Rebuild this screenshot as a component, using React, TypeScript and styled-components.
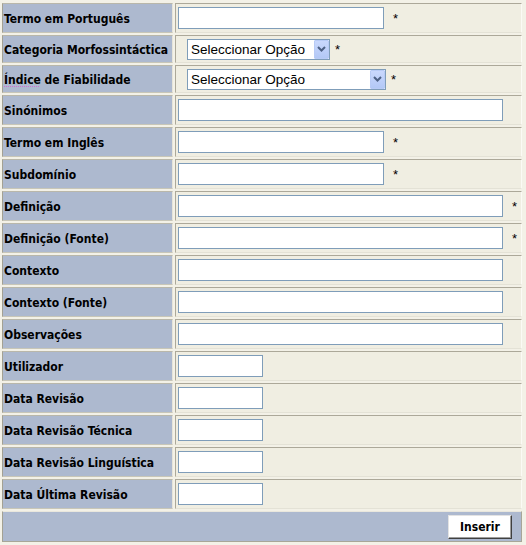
import React from 'react';
import styled, { createGlobalStyle } from 'styled-components';

const GlobalStyle = createGlobalStyle`
    body {
        margin: 0;
        background: #f3f1e7;
        font-family: "DejaVu Sans Condensed", "Liberation Sans", sans-serif;
        color: #000;
    }
`

const Form = styled.form`
    display: flex;
    flex-direction: column;
    gap: 2px;
    padding: 3px 0 0 2px;
    width: 520px;
`

const Row = styled.div<{ $h: number }>`
    display: grid;
    grid-template-columns: 171px 347px;
    column-gap: 2px;
    height: ${(p) => p.$h}px;
`

const Label = styled.div`
    background: #adb9cf;
    border: 1px solid;
    border-color: #b9b7aa #e6e4da #c8c6b8 #a3a193;
    display: flex;
    align-items: center;
    padding: 2px 0 0 1px;
    font-size: 12px;
    font-weight: bold;
    white-space: nowrap;
    overflow: hidden;
`

const Squiggle = styled.span`
    text-decoration: underline dotted #d070d0;
    text-underline-offset: 2px;
`

const Value = styled.div`
    background: #f0eee2;
    border: 1px solid;
    border-color: #aca899 #fbfaf5 #e4e2d6 #aca899;
    display: flex;
    align-items: center;
    padding-left: 2px;
`

const TextInput = styled.input<{ $w: number }>`
    width: ${(p) => p.$w}px;
    height: 22px;
    box-sizing: border-box;
    border: 1px solid #7f9db9;
    background: #fff;
    margin: 0;
    padding: 0 3px;
    font: 13px "Liberation Sans", sans-serif;
    outline: none;
`

const Required = styled.span<{ $gap: number }>`
    font: 13px "Liberation Sans", sans-serif;
    margin-left: ${(p) => p.$gap}px;
`

const SelectWrap = styled.div<{ $w: number }>`
    position: relative;
    width: ${(p) => p.$w}px;
    height: 21px;
    margin-left: 9px;
`

const Select = styled.select`
    appearance: none;
    width: 100%;
    height: 100%;
    box-sizing: border-box;
    border: 1px solid #7f9db9;
    border-radius: 0;
    background: #fff;
    margin: 0;
    padding: 0 0 0 3px;
    font: 13.5px "Liberation Sans", sans-serif;
    color: #000;
    outline: none;
`

const Arrow = styled.span`
    position: absolute;
    top: 1px;
    right: 1px;
    width: 15px;
    height: 19px;
    box-sizing: border-box;
    border: 1px solid #b8cbf6;
    border-radius: 1px;
    background: linear-gradient(#c9d8fd, #b3c8f6);
    display: flex;
    align-items: center;
    justify-content: center;
    pointer-events: none;
`

const Footer = styled.div`
    height: 31px;
    width: 520px;
    box-sizing: border-box;
    background: #adb9cf;
    border: 1px solid;
    border-color: #e9e7dd #a8a698 #a8a698 #a3a193;
    display: flex;
    align-items: center;
    justify-content: flex-end;
    padding-right: 9px;
`

const Button = styled.button`
    width: 64px;
    height: 24px;
    box-sizing: border-box;
    background: #fff;
    border: 1px solid;
    border-color: #e3e3e3 #404040 #404040 #e3e3e3;
    box-shadow: inset -1px -1px #9d9d9d;
    font: bold 12px "DejaVu Sans Condensed", "Liberation Sans", sans-serif;
    color: #000;
    padding: 0;
`

type Field = {
    label: React.ReactNode;
    kind: 'input' | 'select';
    w: number;
    req?: boolean;
};

const MD = 206;
const LG = 325;
const SM = 85;

const fields: Field[] = [
    { label: 'Termo em Português', kind: 'input', w: MD, req: true },
    { label: 'Categoria Morfossintáctica', kind: 'select', w: 143, req: true },
    { label: <span><Squiggle>Índice</Squiggle> de Fiabilidade</span>, kind: 'select', w: 199, req: true },
    { label: 'Sinónimos', kind: 'input', w: LG },
    { label: 'Termo em Inglês', kind: 'input', w: MD, req: true },
    { label: 'Subdomínio', kind: 'input', w: MD, req: true },
    { label: 'Definição', kind: 'input', w: LG, req: true },
    { label: 'Definição (Fonte)', kind: 'input', w: LG, req: true },
    { label: 'Contexto', kind: 'input', w: LG },
    { label: 'Contexto (Fonte)', kind: 'input', w: LG },
    { label: 'Observações', kind: 'input', w: LG },
    { label: 'Utilizador', kind: 'input', w: SM },
    { label: 'Data Revisão', kind: 'input', w: SM },
    { label: 'Data Revisão Técnica', kind: 'input', w: SM },
    { label: 'Data Revisão Linguística', kind: 'input', w: SM },
    { label: 'Data Última Revisão', kind: 'input', w: SM },
];

function App() {
    return (
        <>
            <GlobalStyle />
            <Form onSubmit={(e) => e.preventDefault()}>
                {fields.map((f, i) => (
                    <Row key={i} $h={f.kind === 'select' ? 28 : 30}>
                        <Label>{f.label}</Label>
                        <Value>
                            {f.kind === 'input' ? (
                                <TextInput type="text" $w={f.w} />
                            ) : (
                                <SelectWrap $w={f.w}>
                                    <Select defaultValue="">
                                        <option value="">Seleccionar Opção</option>
                                    </Select>
                                    <Arrow>
                                        <svg width="9" height="6" viewBox="0 0 9 6">
                                            <path d="M1 1 L4.5 4.5 L8 1" fill="none" stroke="#4d6185" strokeWidth="2" />
                                        </svg>
                                    </Arrow>
                                </SelectWrap>
                            )}
                            {f.req && <Required $gap={f.kind === 'select' ? 5 : 9}>*</Required>}
                        </Value>
                    </Row>
                ))}
                <Footer>
                    <Button type="submit">Inserir</Button>
                </Footer>
            </Form>
        </>
    );
}

export default App;
